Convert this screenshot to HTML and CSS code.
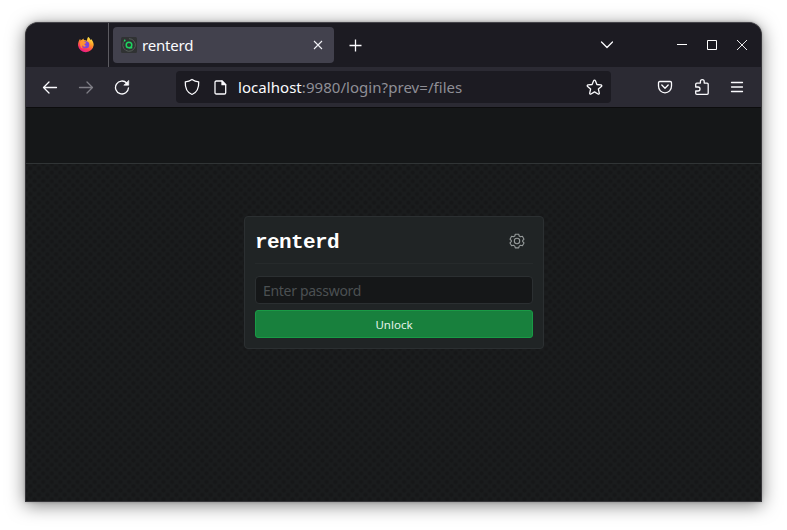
FILE: index.html
```html
<!DOCTYPE html>
<html lang="en">
<head>
<meta charset="utf-8">
<title>renterd</title>
<link rel="stylesheet" href="styles.css">
</head>
<body>
<div class="window">
  <div class="tabs">
    <div class="pinned">
      <svg width="18" height="18" viewBox="0 0 18 18">
        <defs>
          <linearGradient id="fire" x1=".8" y1="0" x2=".3" y2="1"><stop offset="0" stop-color="#fff24a"/><stop offset=".4" stop-color="#ff9a27"/><stop offset=".72" stop-color="#ff4055"/><stop offset="1" stop-color="#e3178d"/></linearGradient>
        </defs>
        <path fill="url(#fire)" d="M11.2 1c1.2.7 1.8 1.8 2.2 2.9.5-.2.7-.7.7-1 1.8 1.7 2.6 4 2.6 6.200A7.900 7.900 0 0 1 1 9.200C1 6.500 2 4.500 3.200 2.800l.3 1.700 1.800-.9c.5-.5.8-.8 1.300-1.100l.2 1.500c1.200.1 2 .2 3.200.7C10 3.400 10.400 2 11.200 1z"/>
        <circle cx="8.800" cy="8.800" r="3.500" fill="#7845df"/>
        <path fill="#ff9230" d="M3.500 5.500c2-.8 3.500-.3 4.300.5l1.500.4c-.2 1-1.400 1.100-1.800 1.700-.2.800.5 1.800 2 1.500-1 1.600-3.300 1.300-4.300-.3-.7 1-.2 2.500.8 3.300C3.500 12 2.500 8.500 3.500 5.500z"/>
      </svg>
    </div>
    <div class="tab">
      <svg width="16" height="16" viewBox="0 0 16 16" fill="none">
        <rect width="16" height="16" rx="1.500" fill="#303233"/>
        <path d="M4 3.200A6.300 6.300 0 1 0 8 1.700" stroke="#555c58"/>
        <circle cx="8" cy="8" r="2.800" stroke="#1ed660" stroke-width="1.500"/>
        <path d="M8 10.800h3.300" stroke="#1ed660" stroke-width="1.400"/>
        <circle cx="3.700" cy="3.500" r=".9" fill="#1ed660"/>
      </svg>
      <span class="tab-title">renterd</span>
      <svg class="tab-close" width="10" height="10" viewBox="0 0 10 10" stroke="#f0f0f4" stroke-width="1.100"><path d="M1 1l8 8M9 1l-8 8"/></svg>
    </div>
    <svg class="plus" width="14" height="14" viewBox="0 0 14 14" stroke="#fbfbfe" stroke-width="1.300"><path d="M.5 7.500h12M6.500 1.500v12"/></svg>
    <svg class="chevron" width="14" height="10" viewBox="0 0 14 10" fill="none" stroke="#fbfbfe" stroke-width="1.300" stroke-linecap="round" stroke-linejoin="round"><path d="M1.500 2l5.500 5.500L12.500 2"/></svg>
    <div class="controls">
      <svg width="10" height="10" viewBox="0 0 10 10" stroke="#fff"><path d="M0 4.500h10"/></svg>
      <svg width="10" height="10" viewBox="0 0 10 10" fill="none" stroke="#fff"><path d="M.5.5h9v9h-9z"/></svg>
      <svg width="10" height="10" viewBox="0 0 10 10" stroke="#fff" stroke-width=".9"><path d="M0 0l10 10M10 0L0 10"/></svg>
    </div>
  </div>
  <div class="toolbar">
    <div class="nav">
      <svg width="16" height="16" viewBox="0 0 16 16" fill="none" stroke="#fbfbfe" stroke-width="1.300" stroke-linecap="round" stroke-linejoin="round"><path d="M14.500 8.500h-13M7 3L1.500 8.500 7 14"/></svg>
      <svg width="16" height="16" viewBox="0 0 16 16" fill="none" stroke="#7f7e86" stroke-width="1.300" stroke-linecap="round" stroke-linejoin="round"><path d="M1.500 8.500h13M9 3l5.500 5.500L9 14"/></svg>
      <svg width="16" height="16" viewBox="0 0 16 16" fill="none" stroke="#fbfbfe" stroke-width="1.300" stroke-linecap="round"><path d="M12.700 4A6.500 6.500 0 1 0 14.500 8.800"/><path d="M14.700 1.800v4.400h-4.500z" fill="#fbfbfe" stroke-width=".7" stroke-linejoin="round"/></svg>
    </div>
    <div class="url">
      <svg width="16" height="18" viewBox="0 0 16 18" fill="none" stroke="#fbfbfe" stroke-width="1.300" stroke-linejoin="round"><path d="M8 1.500C6.200 2.900 3.700 3.800 1.300 3.900 1 9.700 2.400 14.300 8 16.500c5.600-2.200 7-6.800 6.700-12.600C12.300 3.800 9.800 2.900 8 1.500z"/></svg>
      <svg class="page-icon" width="13" height="15" viewBox="0 0 13 15" fill="none" stroke="#fbfbfe" stroke-width="1.300" stroke-linejoin="round"><path d="M2.300 1H8l3.700 3.700v8c0 .8-.5 1.300-1.300 1.300H2.300C1.500 14 1 13.500 1 12.700V2.300C1 1.500 1.500 1 2.300 1z"/><path d="M8 1v3.700h3.700z" fill="#fbfbfe"/></svg>
      <span class="address"><b>localhost</b>:9980/login?prev=/files</span>
      <svg class="star" width="17" height="17" viewBox="0 0 17 17" fill="none" stroke="#fbfbfe" stroke-width="1.300" stroke-linejoin="round"><path d="M8.500 1.200c.4 0 .7.200.9.600l1.500 3.700 4 .4c.9.100 1.200 1 .5 1.600l-3 2.600.9 4c.2.900-.6 1.400-1.300.9l-3.500-2.100L5 15c-.7.500-1.500 0-1.300-.9l.9-4-3-2.600c-.7-.6-.4-1.500.5-1.600l4-.4 1.500-3.700c.2-.4.5-.6.900-.6z"/></svg>
    </div>
    <div class="tools">
      <svg width="16" height="16" viewBox="0 0 16 16" fill="none" stroke="#fbfbfe" stroke-width="1.300" stroke-linecap="round" stroke-linejoin="round"><path d="M2.800 2.500h10.400c.8 0 1.300.5 1.300 1.300V7c0 4-2.800 6.800-6.500 6.800S1.500 11 1.500 7V3.800c0-.8.500-1.300 1.300-1.300zM4.800 6L8 9.200 11.200 6"/></svg>
      <svg width="16" height="18" viewBox="0 0 16 18" fill="none" stroke="#fbfbfe" stroke-width="1.300" stroke-linejoin="round"><path d="M1.700 9V6.200c0-.7.400-1.100 1.100-1.100h3.600V3.500a1.900 1.900 0 0 1 3.800 0v1.600h2.900c.7 0 1.100.4 1.100 1.100v9.100c0 .7-.4 1.100-1.100 1.100H2.800c-.7 0-1.100-.4-1.100-1.100V13h2.300a2 2 0 0 0 0-4z"/></svg>
      <svg width="14" height="12" viewBox="0 0 14 12" stroke="#fbfbfe" stroke-width="1.300" stroke-linecap="round"><path d="M1.500 1.500h11M1.500 6h11M1.500 10.500h11"/></svg>
    </div>
  </div>
  <header class="app-header"></header>
  <main class="content">
    <form class="card">
      <div class="card-head">
        <h1>renterd</h1>
        <svg width="16" height="16" viewBox="0 0 16 16" fill="none" stroke="#959a9a" stroke-width="1.100" stroke-linejoin="round"><path d="M6.300 1.200h3.400l.5 1.800 1.300.8 1.900-.5 1.600 2.900L13.700 7.500v1.200l1.300 1.200-1.600 2.900-1.900-.5-1.300.8-.5 1.800H6.300l-.5-1.800-1.300-.8-1.900.5L1 9.900l1.300-1.200V7.500L1 6.200l1.600-2.900 1.900.5L5.800 3z"/><circle cx="8" cy="8" r="2.700"/></svg>
      </div>
      <input class="field" type="text" placeholder="Enter password">
      <button class="unlock" type="button">Unlock</button>
    </form>
  </main>
</div>
</body>
</html>
```

FILE: styles.css
```css
* { box-sizing: border-box; }
body { margin: 0; padding: 22px 25px 28px; height: 530px; background: #fff; overflow: hidden; }
svg { display: block; flex: none; }

.window {
  width: 737px; height: 480px; display: flex; flex-direction: column;
  border: 1px solid #353438; border-top-color: #45444a; border-radius: 13px 13px 0 0;
  background: #151617; overflow: hidden;
  box-shadow: 0 3px 18px rgba(0,0,0,.5), 0 0 3px rgba(0,0,0,.25);
}

.tabs { height: 44px; flex: none; display: flex; align-items: center; background: #1c1b22; }
.pinned { width: 83px; height: 44px; padding: 13px 0 0 51px; border-right: 1px solid #5c5b61; }
.tab {
  width: 221px; height: 36px; margin-left: 4px; padding: 0 11px 0 8px;
  display: flex; align-items: center; background: #42414d; border-radius: 4px;
}
.tab-title { margin-left: 5px; font: 15px/20px "Noto Sans", sans-serif; letter-spacing: -.2px; color: #fbfbfe; }
.tab-close { margin-left: auto; }
.plus { margin-left: 15px; }
.chevron { margin-left: 237px; }
.controls { display: flex; gap: 20px; margin: 0 14px 0 auto; }

.toolbar { height: 41px; flex: none; display: flex; align-items: center; background: #2b2a33; border-bottom: 1px solid #0c0c0d; }
.nav { display: flex; gap: 20px; margin-left: 16px; }
.url {
  width: 435px; height: 32px; margin-left: 46px; padding: 0 8px 0 8px;
  display: flex; align-items: center; background: #1c1b22; border-radius: 4px;
}
.page-icon { margin-left: 14px; }
.address { margin-left: 11px; font: 15px/20px "Noto Sans", sans-serif; letter-spacing: .05px; color: #8f8f96; white-space: nowrap; }
.address b { font-weight: 400; color: #fbfbfe; }
.star { margin-left: auto; }
.tools { display: flex; align-items: center; gap: 20.500px; margin: 0 17px 0 auto; }

.app-header { height: 56px; flex: none; background: #151718; border-bottom: 1px solid #303435; }
.content {
  flex: 1; padding-top: 52px; background-color: #1a1c1d;
  background-image: radial-gradient(circle, #161718 1.300px, transparent 2.800px), radial-gradient(circle, #161718 1.300px, transparent 2.800px);
  background-size: 8.600px 8.600px; background-position: 0 0, 4.300px 4.300px;
}
.card {
  width: 300px; height: 133px; margin: 0 auto 0 218px; padding: 0 10px;
  display: flex; flex-direction: column;
  background: #202425; border: 1px solid #2b2f31; border-radius: 4px;
}
.card-head {
  height: 47px; margin-bottom: 12px; padding: 2px 8px 0 0; flex: none;
  display: flex; align-items: center; justify-content: space-between; border-bottom: 1px solid #262a2b;
}
h1 { margin: 0; padding-top: 3px; font: bold 21px/28px "Liberation Mono", monospace; letter-spacing: -.6px; color: #fff; }
.field {
  width: 278px; height: 28px; margin: 0 0 6px; padding: 1px 7px 0; flex: none;
  background: #151718; border: 1px solid #2b2f31; border-radius: 4px;
  font: 14px "Noto Sans", sans-serif; letter-spacing: -.3px; color: #fff;
}
.field::placeholder { color: #4b5052; opacity: 1; }
.unlock {
  width: 278px; height: 28px; padding: 1px 0 0; flex: none;
  background: #18803d; border: 1px solid #199a45; border-radius: 3px;
  font: 11.500px "Noto Sans", sans-serif; letter-spacing: 0; color: #e4f3e9;
}
```
